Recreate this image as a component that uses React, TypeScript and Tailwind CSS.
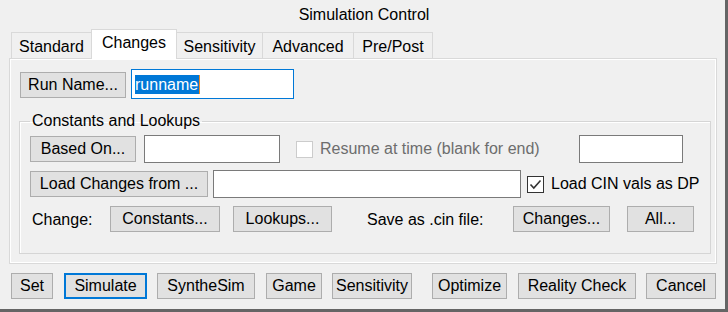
import type { ReactNode } from "react"

type BtnProps = {
  className: string
  focused?: boolean
  children: ReactNode
}

function Btn({ className, focused, children }: BtnProps) {
  const edge = focused ? "border-2 border-[#0078d7]" : "border border-[#adadad]"
  return (
    <button
      className={
        "h-[26px] shrink-0 flex items-center justify-center bg-[#e1e1e1] leading-none text-black " +
        edge +
        " " +
        className
      }
    >
      {children}
    </button>
  )
}

function Field({ className }: { className: string }) {
  return <div className={"shrink-0 bg-white border border-[#7a7a7a] " + className} />
}

export default function App() {
  return (
    <div className="w-[728px] h-[312px] flex flex-col overflow-hidden bg-[#f0f0f0] border-r-[3px] border-b-[3px] border-[#656565] font-['Liberation_Sans',Arial,sans-serif] text-[16px] text-black select-none">
      {/* title */}
      <div className="h-[29px] shrink-0 flex items-center justify-center pl-[3px] pt-[1px]">
        Simulation Control
      </div>

      {/* tabs */}
      <div className="h-[29px] shrink-0 flex items-end pl-[11px]">
        <div className="h-[26px] w-[80px] flex items-center justify-center border-l border-t border-[#d9d9d9] pt-[2px]">
          Standard
        </div>
        <div className="relative z-10 -mb-px h-[30px] w-[86px] flex items-center justify-center bg-white border border-b-0 border-[#d9d9d9] pb-[3px]">
          Changes
        </div>
        <div className="h-[26px] w-[86px] flex items-center justify-center border-t border-r border-[#d9d9d9] pt-[2px]">
          Sensitivity
        </div>
        <div className="h-[26px] w-[91px] flex items-center justify-center border-t border-r border-[#d9d9d9] pt-[2px]">
          Advanced
        </div>
        <div className="h-[26px] w-[79px] flex items-center justify-center border-t border-r border-[#d9d9d9] pt-[2px]">
          Pre/Post
        </div>
      </div>

      {/* tab panel */}
      <div className="ml-[9px] w-[708px] h-[206px] shrink-0 border border-[#d9d9d9] shadow-[inset_0_0_0_1px_#ffffff] pt-[10px] pl-[10px]">
        <div className="flex items-center">
          <Btn className="w-[106px] mt-[1px]">Run Name...</Btn>
          <div className="ml-[5px] w-[163px] h-[30px] shrink-0 bg-white border border-[#0078d7] flex items-center pl-[3px]">
            <span className="bg-[#0078d7] text-white leading-[19px] pr-[1px] border-r border-[#f08a24]">runname</span>
          </div>
        </div>

        <fieldset className="mt-[13px] w-[689px] ml-[-1px] border border-[#d5d5d5] shadow-[inset_1px_1px_0_#ffffff] px-[10px] pb-[21px]">
          <legend className="px-[2px] leading-[18px]">Constants and Lookups</legend>

          <div className="mt-[5px] flex items-center">
            <Btn className="w-[106px]">Based On...</Btn>
            <Field className="ml-[8px] w-[136px] h-[28px]" />
            <div className="ml-[16px] w-[283px] shrink-0 flex items-center">
              <div className="w-[17px] h-[17px] border border-[#cccccc] bg-white" />
              <span className="ml-[7px] text-[#6d6d6d]">Resume at time (blank for end)</span>
            </div>
            <Field className="w-[104px] h-[28px]" />
          </div>

          <div className="mt-[7px] flex items-center">
            <Btn className="w-[178px]">Load Changes from ...</Btn>
            <Field className="ml-[5px] w-[308px] h-[28px]" />
            <div className="ml-[6px] w-[17px] h-[17px] shrink-0 border border-[#333333] bg-white flex items-center justify-center">
              <svg width="13" height="13" viewBox="0 0 13 13" fill="none">
                <path d="M1.5 6.5 L4.8 10 L11.5 2.5" stroke="#333333" strokeWidth="1.6" />
              </svg>
            </div>
            <span className="ml-[7px] whitespace-nowrap">Load CIN vals as DP</span>
          </div>

          <div className="mt-[8px] flex items-center">
            <span className="ml-[2px] w-[78px] shrink-0 pt-[2px]">Change:</span>
            <Btn className="w-[110px]">Constants...</Btn>
            <Btn className="ml-[13px] w-[99px]">Lookups...</Btn>
            <span className="ml-[35px] w-[146px] shrink-0 pt-[2px]">Save as .cin file:</span>
            <Btn className="w-[97px]">Changes...</Btn>
            <Btn className="ml-[17px] w-[67px]">All...</Btn>
          </div>
        </fieldset>
      </div>

      {/* bottom buttons */}
      <div className="mt-[9px] flex items-center pl-[11px]">
        <Btn className="w-[42px]">Set</Btn>
        <Btn focused className="ml-[11px] w-[83px]">Simulate</Btn>
        <Btn className="ml-[10px] w-[98px]">SyntheSim</Btn>
        <Btn className="ml-[11px] w-[56px]">Game</Btn>
        <Btn className="ml-[10px] w-[80px]">Sensitivity</Btn>
        <Btn className="ml-[20px] w-[75px]">Optimize</Btn>
        <Btn className="ml-[11px] w-[118px]">Reality Check</Btn>
        <Btn className="ml-[10px] w-[70px]">Cancel</Btn>
      </div>
    </div>
  )
}
